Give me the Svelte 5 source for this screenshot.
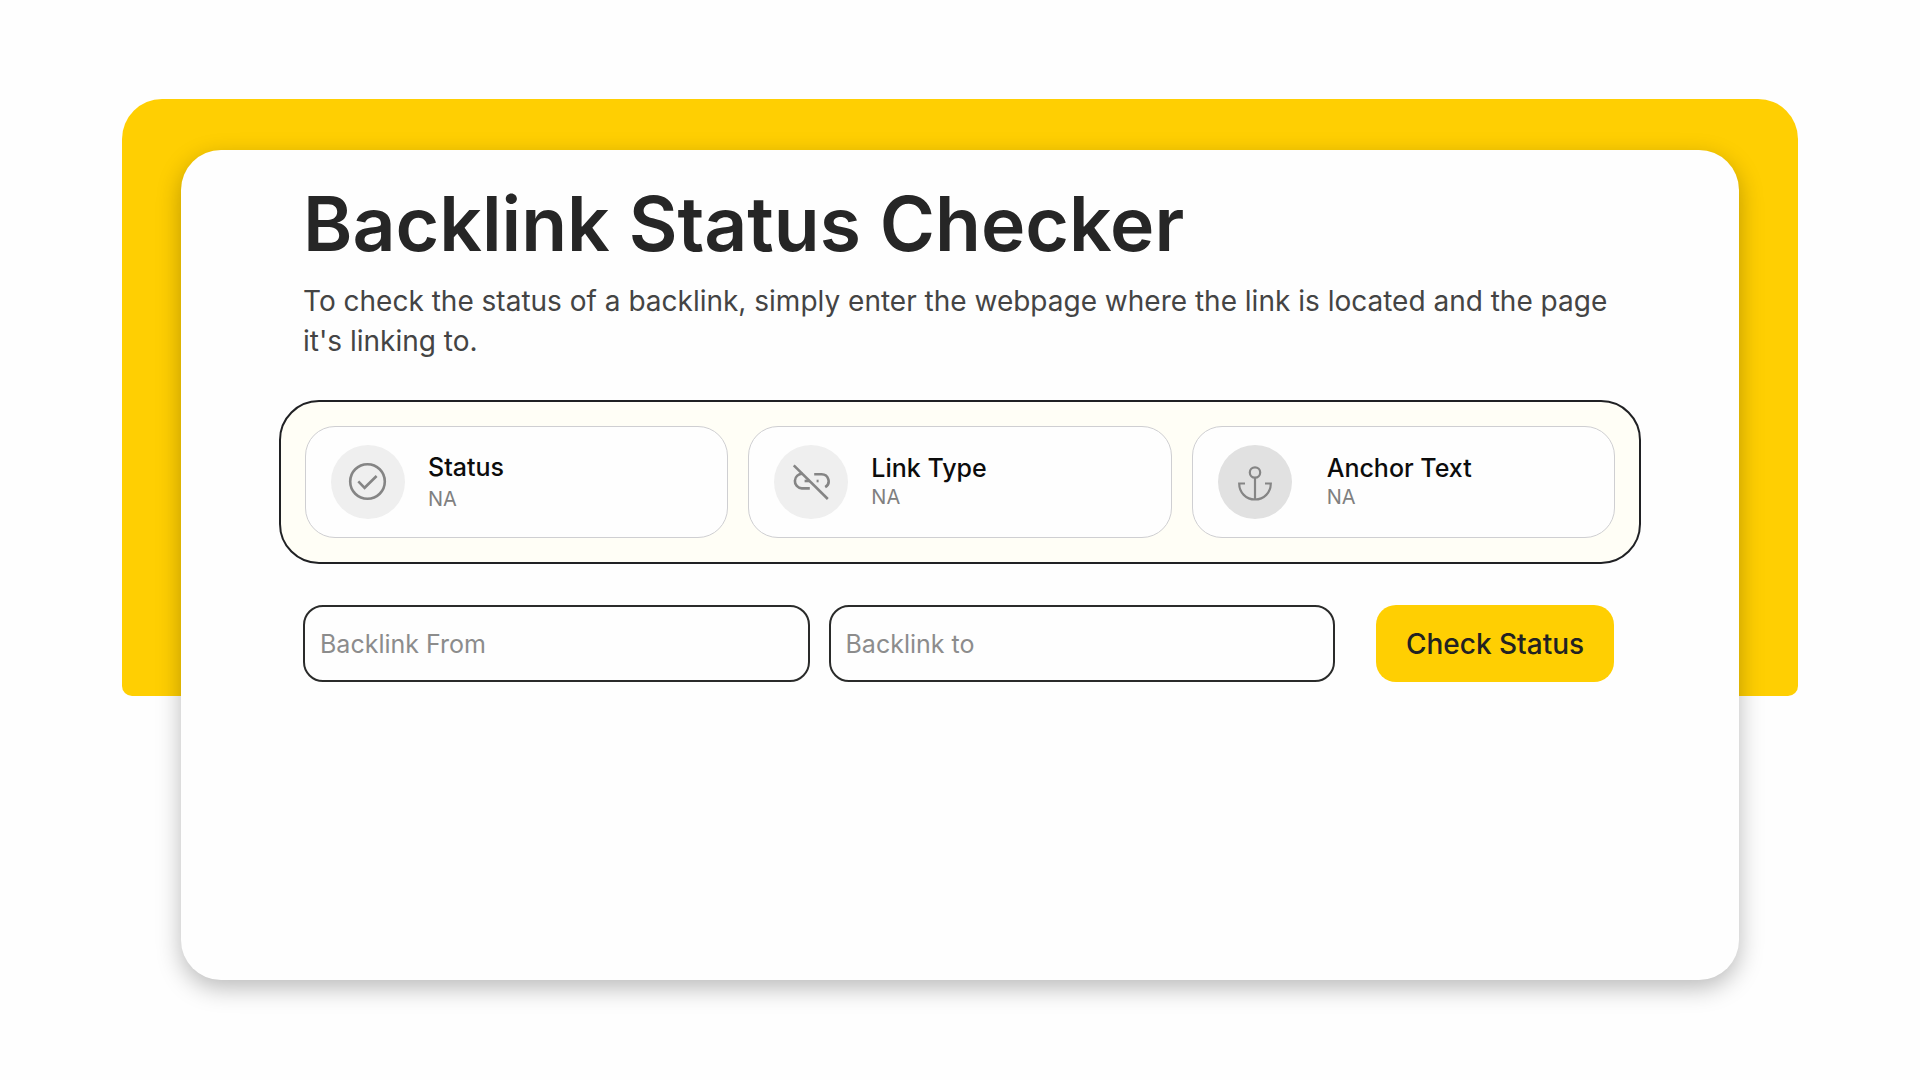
<script lang="ts">
	let from = '';
	let to = '';

	const results = [
		{ id: 'status', label: 'Status', value: 'NA' },
		{ id: 'link', label: 'Link Type', value: 'NA' },
		{ id: 'anchor', label: 'Anchor Text', value: 'NA' }
	];
</script>

<main class="page">
	<div class="backdrop" aria-hidden="true"></div>
	<section class="card">
		<header class="intro">
			<h1>Backlink Status Checker</h1>
			<p>
				To check the status of a backlink, simply enter the webpage where the link is located and the
				page it's linking to.
			</p>
		</header>

		<div class="results">
			{#each results as result (result.id)}
				<div class={`result ${result.id}`}>
					<span class="resultIcon" aria-hidden="true">
						{#if result.id === 'status'}
							<svg viewBox="0 0 40 40" stroke-width="2.6">
								<circle cx="19.5" cy="19.5" r="17.3" />
								<path d="M10.3 19.4L16.6 25.8L28.6 14" />
							</svg>
						{:else if result.id === 'link'}
							<svg viewBox="0 0 40 40" stroke-width="2.6">
								<path d="M2.8 3.4L36.8 37" />
								<path d="M11.6 11.8a7.3 7.3 0 0 0-.8 14.6h8" />
								<path d="M23.2 12.2h7.4a7 7 0 0 1 3.6 13" />
								<path d="M13.6 19h5" />
								<path d="M25.6 19h2" />
							</svg>
						{:else}
							<svg viewBox="0 0 40 40" stroke-width="2.2">
								<circle cx="20" cy="10.5" r="5.2" />
								<path d="M20 15.7V37.5" />
								<path d="M10 21.5H4.2C4.2 30.5 11 37.5 20 37.5S35.8 30.5 35.8 21.5H30" />
							</svg>
						{/if}
					</span>
					<div class="resultBody">
						<span class="resultLabel">{result.label}</span>
						<span class="resultValue">{result.value}</span>
					</div>
				</div>
			{/each}
		</div>

		<form class="checker" on:submit|preventDefault>
			<input type="text" aria-label="Backlink From" placeholder="Backlink From" bind:value={from} />
			<input type="text" aria-label="Backlink to" placeholder="Backlink to" bind:value={to} />
			<button type="submit">Check Status</button>
		</form>
	</section>
</main>

<style>
	:global(body) {
		background: #fefefe;
		font-family: Inter, 'Liberation Sans', sans-serif;
	}

	.page {
		display: grid;
		padding: 99px 122px 100px;
	}

	.backdrop {
		grid-area: 1 / 1;
		height: 597px;
		border-radius: 40px 40px 10px 10px;
		background: #ffcf02;
	}

	.card {
		grid-area: 1 / 1;
		margin: 51px 59px 0;
		padding: 32px 98px 298px;
		border-radius: 40px;
		background: #fefefe;
		box-shadow: 0 8px 24px rgba(0, 0, 0, 0.27);
	}

	.intro {
		padding: 0 20px 0 24px;
	}

	h1 {
		margin: 0;
		color: #262626;
		font-size: 75px;
		line-height: 84px;
		font-weight: 600;
	}

	p {
		margin: 15px 0 0;
		color: #444;
		font-size: 28px;
		line-height: 40px;
		font-weight: 400;
	}

	.results {
		display: grid;
		grid-template-columns: repeat(3, 1fr);
		gap: 20px;
		margin-top: 39px;
		padding: 24px;
		border: 2px solid #202124;
		border-radius: 40px;
		background: #fffef6;
	}

	.result {
		display: flex;
		align-items: center;
		gap: 23px;
		padding: 18px 25px;
		border: 1px solid #cfcfd2;
		border-radius: 30px;
		background: #fefefe;
	}

	.result.anchor {
		gap: 35px;
	}

	.resultIcon {
		display: grid;
		place-items: center;
		width: 74px;
		height: 74px;
		flex: 0 0 74px;
		border-radius: 50%;
		background: #efefef;
	}

	.anchor .resultIcon {
		background: #e1e1e1;
	}

	.resultIcon svg {
		width: 40px;
		height: 40px;
		fill: none;
		stroke: #858585;
	}

	.resultBody {
		display: grid;
		min-width: 0;
	}

	.status .resultBody {
		gap: 3px;
	}

	.resultLabel {
		color: #0c0c0c;
		font-size: 25px;
		line-height: 30px;
		font-weight: 500;
	}

	.resultValue {
		color: #808080;
		font-size: 20px;
		line-height: 28px;
	}

	.checker {
		display: grid;
		grid-template-columns: 1fr 1fr 260px;
		gap: 19px;
		margin-top: 41px;
		padding: 0 27px 0 24px;
	}

	input {
		box-sizing: border-box;
		min-width: 0;
		height: 77px;
		padding: 0 15px;
		border: 2px solid #2a2b2a;
		border-radius: 20px;
		background: #fefefe;
		color: #262626;
		font: 400 25px Inter, 'Liberation Sans', sans-serif;
	}

	input::placeholder {
		color: #8c8c8c;
		opacity: 1;
	}

	button {
		padding: 0;
		margin-left: 22px;
		border: 0;
		border-radius: 20px;
		background: #ffcf02;
		color: #222;
		font: 500 28px Inter, 'Liberation Sans', sans-serif;
		white-space: nowrap;
		cursor: pointer;
	}
</style>
